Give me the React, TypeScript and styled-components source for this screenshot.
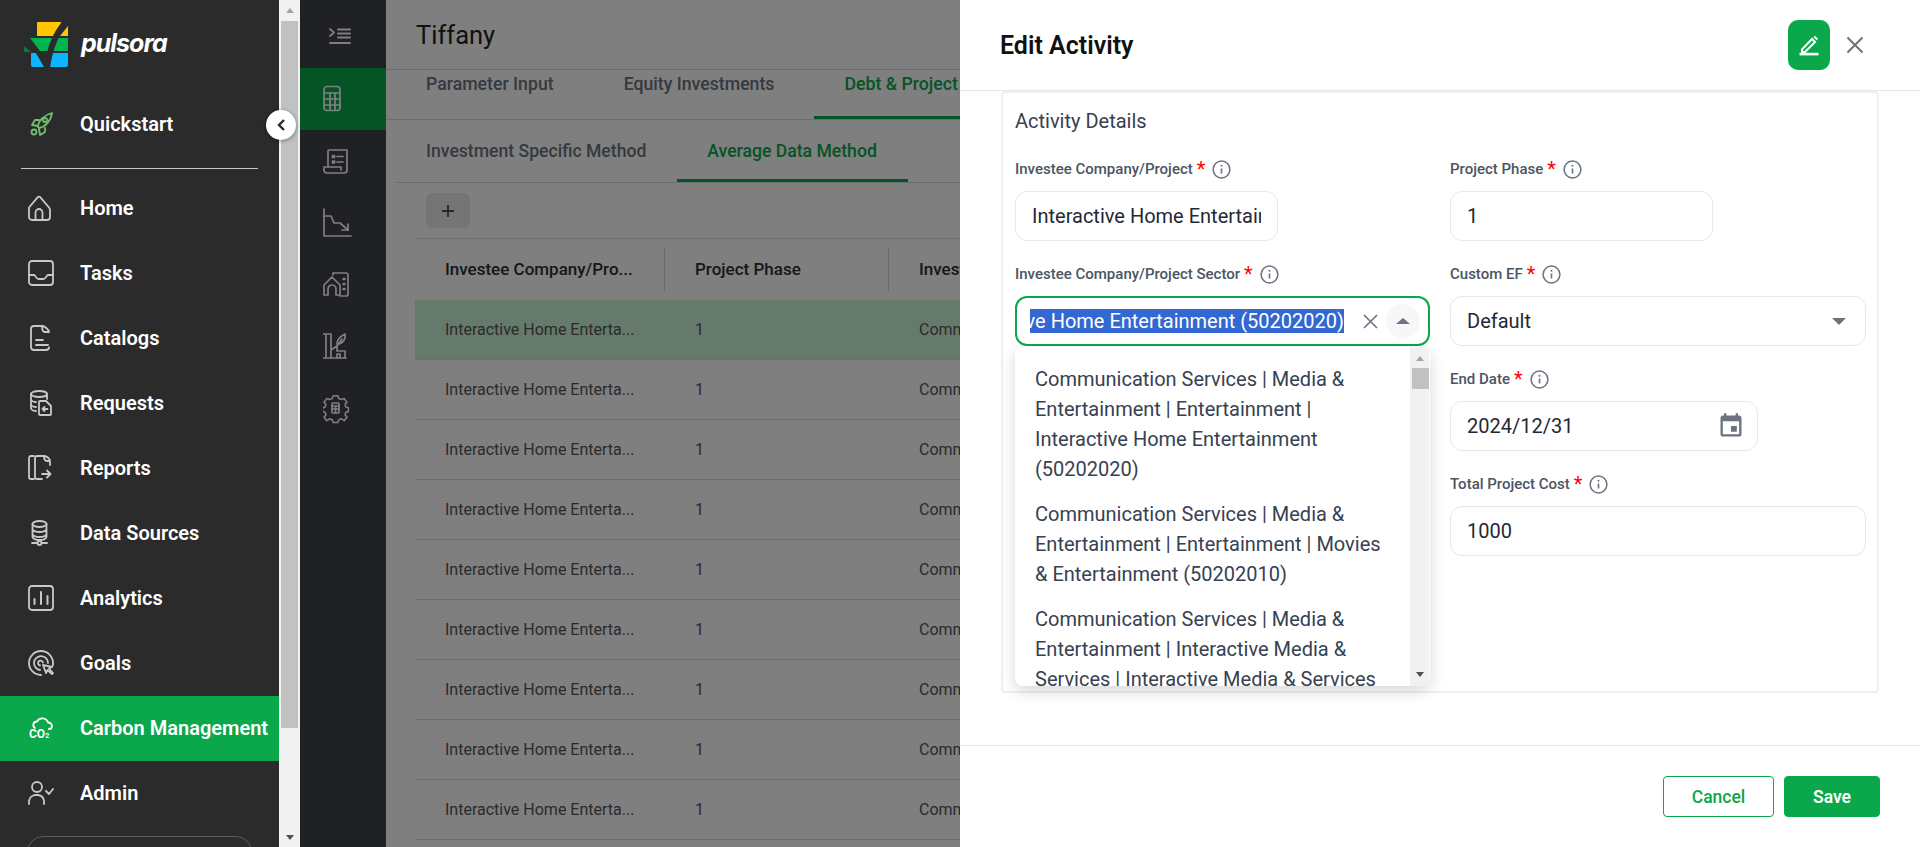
import React from "react";
import styled, { createGlobalStyle } from "styled-components";

const Global = createGlobalStyle`
  html, body { margin: 0; padding: 0; height: 100%; overflow: hidden; background: #fff; }
  * { box-sizing: border-box; }
  #root { height: 100%; }
`;

const Page = styled.div`
  display: flex;
  height: 100vh;
  overflow: hidden;
  font-family: Roboto, "Liberation Sans", sans-serif;
`;

/* ---------- left sidebar ---------- */
const Sidebar = styled.aside`
  position: relative;
  z-index: 20;
  flex: 0 0 300px;
  display: flex;
  background: #2b2b2b;
`;
const SideNav = styled.nav`
  flex: 0 0 279px;
  display: flex;
  flex-direction: column;
  overflow: hidden;
`;
const LogoRow = styled.div`
  flex: 0 0 92px;
  display: flex;
  align-items: flex-start;
  gap: 13px;
  padding: 22px 0 0 24px;
`;
const LogoText = styled.span`
  font-family: Inter, sans-serif;
  font-style: italic;
  font-weight: 700;
  font-size: 25px;
  line-height: 43px;
  letter-spacing: -1px;
  color: #fff;
`;
const NavItem = styled.div<{ $active?: boolean }>`
  flex: 0 0 65px;
  display: flex;
  align-items: center;
  gap: 26px;
  padding: 0 0 1px 28px;
  background: ${(p) => (p.$active ? "#0aa84a" : "transparent")};
  color: #fff;
  font-size: 20px;
  font-weight: 600;
  white-space: nowrap;
  svg {
    flex: 0 0 26px;
    fill: none;
    stroke: ${(p) => (p.$active ? "#fff" : "#c8c8c8")};
    stroke-width: 1.8;
    stroke-linecap: round;
    stroke-linejoin: round;
  }
`;
const QuickIcon = styled.span`
  display: flex;
  svg { stroke: #6fbf73; }
`;
const SideDivider = styled.hr`
  flex: 0 0 1px;
  width: 237px;
  margin: 11px 0 7px 21px;
  border: 0;
  background: #c4c8c4;
`;
const OrgBox = styled.div`
  flex: 0 0 60px;
  width: 225px;
  margin: 10px 0 0 27px;
  border: 1px solid #5a5d5a;
  border-radius: 16px;
`;
const SideScroll = styled.div`
  flex: 0 0 21px;
  display: flex;
  flex-direction: column;
  padding-left: 2px;
  padding-right: 2px;
  background: #f1f1f1;
`;
const ScrollArrow = styled.div<{ $down?: boolean }>`
  flex: 0 0 ${(p) => (p.$down ? "auto" : "21px")};
  margin-top: ${(p) => (p.$down ? "auto" : "0")};
  margin-bottom: ${(p) => (p.$down ? "7px" : "0")};
  display: flex;
  align-items: center;
  justify-content: center;
  &::before {
    content: "";
    border-left: 4.5px solid transparent;
    border-right: 4.5px solid transparent;
    ${(p) => (p.$down ? "border-top: 5px solid #505050;" : "border-bottom: 5px solid #a3a3a3;")}
  }
`;
const SideThumb = styled.div`
  flex: 0 0 707px;
  background: #c1c1c1;
`;
const CollapseBtn = styled.button`
  position: absolute;
  left: 266px;
  top: 110px;
  width: 30px;
  height: 30px;
  padding: 0;
  display: flex;
  align-items: center;
  justify-content: center;
  border: 0;
  border-radius: 50%;
  background: #fff;
  box-shadow: 0 1px 4px rgba(0, 0, 0, 0.4);
`;

/* ---------- dimmed page behind the drawer ---------- */
const Rail = styled.div`
  flex: 0 0 86px;
  display: flex;
  flex-direction: column;
  background: #404348;
`;
const RailItem = styled.div<{ $active?: boolean; $first?: boolean }>`
  flex: 0 0 ${(p) => (p.$first ? "68px" : "62px")};
  display: flex;
  align-items: center;
  padding-left: 23px;
  background: ${(p) => (p.$active ? "#0aa84a" : "transparent")};
  svg {
    fill: none;
    stroke: #fff;
    stroke-width: 1.7;
    stroke-linecap: round;
    stroke-linejoin: round;
  }
`;
const Content = styled.main`
  flex: 0 0 574px;
  min-width: 0;
  display: flex;
  flex-direction: column;
  overflow: hidden;
`;
const PageHeader = styled.header`
  flex: 0 0 70px;
  padding-left: 30px;
  display: flex;
  align-items: center;
  border-bottom: 1px solid #d8d8d8;
  font-size: 25.5px;
  color: #222;
`;
const MainTabs = styled.div`
  flex: 0 0 50px;
  display: flex;
  gap: 10px;
  padding-left: 10px;
  border-bottom: 1px solid #d8d8d8;
`;
const MainTab = styled.div<{ $active?: boolean }>`
  height: 49px;
  padding: 0 30px;
  font-size: 17.7px;
  font-weight: 500;
  line-height: 28px;
  white-space: nowrap;
  color: ${(p) => (p.$active ? "#0aa84a" : "#6b7280")};
  border-bottom: 3px solid ${(p) => (p.$active ? "#0aa84a" : "transparent")};
`;
const SubTabs = styled.div`
  flex: 0 0 63px;
  display: flex;
  margin-left: 10px;
  border-bottom: 1px solid #d8d8d8;
`;
const SubTab = styled.div<{ $active?: boolean }>`
  height: 62px;
  padding: 2px 31px 0 30px;
  display: flex;
  align-items: center;
  font-size: 17.6px;
  font-weight: 500;
  white-space: nowrap;
  color: ${(p) => (p.$active ? "#0aa84a" : "#6b7280")};
  border-bottom: 3px solid ${(p) => (p.$active ? "#0aa84a" : "transparent")};
`;
const Toolbar = styled.div`
  flex: 0 0 55px;
  padding: 10px 0 0 40px;
`;
const AddBtn = styled.button`
  width: 44px;
  height: 35px;
  padding: 0;
  display: flex;
  align-items: center;
  justify-content: center;
  border: 0;
  border-radius: 6px;
  background: #ebebeb;
`;
const TableGrid = styled.div`
  margin-left: 29px;
  border-top: 1px solid #dcdcdc;
`;
const HeadRow = styled.div`
  display: grid;
  grid-template-columns: 250px 224px 400px;
  height: 61px;
  align-items: center;
`;
const HeadCell = styled.div<{ $sep?: boolean }>`
  height: 43px;
  padding: 0 0 2px 30px;
  display: flex;
  align-items: center;
  font-size: 17px;
  font-weight: 500;
  color: #2e2e2e;
  white-space: nowrap;
  border-right: ${(p) => (p.$sep ? "1px solid #cfcfcf" : "0")};
`;
const BodyRow = styled.div<{ $selected?: boolean }>`
  display: grid;
  grid-template-columns: 250px 224px 400px;
  height: 60px;
  align-items: center;
  background: ${(p) => (p.$selected ? "#ccf4d8" : "transparent")};
  border-bottom: 1px solid #dcdcdc;
`;
const BodyCell = styled.div`
  padding-left: 30px;
  font-size: 16px;
  color: #555;
  white-space: nowrap;
`;
const Overlay = styled.div`
  position: fixed;
  inset: 0 0 0 300px;
  z-index: 10;
  background: rgba(0, 0, 0, 0.5);
`;

/* ---------- drawer ---------- */
const Drawer = styled.section`
  position: fixed;
  top: 0;
  right: 0;
  bottom: 0;
  z-index: 15;
  width: 960px;
  display: flex;
  flex-direction: column;
  background: #fff;
`;
const DrawerHead = styled.header`
  flex: 0 0 91px;
  display: flex;
  align-items: center;
  padding: 0 55px 0 40px;
  border-bottom: 1px solid #e5e7eb;
`;
const DrawerTitle = styled.h2`
  margin: 0;
  margin-right: auto;
  font-size: 25px;
  font-weight: 600;
  color: #111;
`;
const EditBtn = styled.button`
  width: 42px;
  height: 50px;
  padding: 0;
  display: flex;
  align-items: center;
  justify-content: center;
  border: 0;
  border-radius: 10px;
  background: #0aa84a;
`;
const CloseBtn = styled.button`
  width: 26px;
  height: 26px;
  margin: 0 -3px 0 12px;
  padding: 0;
  display: flex;
  align-items: center;
  justify-content: center;
  border: 0;
  background: transparent;
`;
const DrawerBody = styled.div`
  flex: 0 0 654px;
  padding: 0 41px;
`;
const Card = styled.div`
  height: 602px;
  padding: 16px 12px 0;
  border: 2px solid #eff0f2;
  border-radius: 4px;
`;
const CardTitle = styled.h3`
  margin: 0 0 26px;
  font-size: 20px;
  line-height: 24px;
  font-weight: 400;
  color: #374151;
`;
const FormGrid = styled.div`
  display: grid;
  grid-template-columns: 415px 416px;
  column-gap: 20px;
  row-gap: 23px;
`;
const Field = styled.div<{ $right?: boolean }>`
  position: relative;
  ${(p) => (p.$right ? "grid-column: 2;" : "")}
`;
const Label = styled.label`
  height: 20px;
  margin-bottom: 12px;
  display: flex;
  align-items: center;
  font-size: 15px;
  font-weight: 500;
  color: #4b5563;
  white-space: nowrap;
  svg { margin-left: 7px; }
`;
const Star = styled.span`
  margin-left: 4px;
  color: #f00;
  font-size: 20px;
  line-height: 18px;
  font-weight: 400;
`;
const Input = styled.input<{ $width?: number }>`
  display: block;
  width: ${(p) => (p.$width ? `${p.$width}px` : "100%")};
  height: 50px;
  padding: 0 16px;
  border: 1px solid #e5e7eb;
  border-radius: 12px;
  outline: 0;
  background: #fff;
  font: 400 20px Roboto, sans-serif;
  color: #1f2937;
`;
const ControlBox = styled.div<{ $width?: number; $focused?: boolean }>`
  width: ${(p) => (p.$width ? `${p.$width}px` : "100%")};
  height: 50px;
  display: flex;
  align-items: center;
  padding: 0 ${(p) => (p.$focused ? "8px" : "12px")} 0 ${(p) => (p.$focused ? "13px" : "16px")};
  border: ${(p) => (p.$focused ? "2px solid #0aa84a" : "1px solid #e5e7eb")};
  border-radius: 12px;
  background: #fff;
  font-size: 20px;
  color: #1f2937;
`;
const ControlText = styled.span`
  margin-right: auto;
`;
const SelectionClip = styled.div`
  flex: 0 0 314px;
  height: 24px;
  display: flex;
  justify-content: flex-end;
  overflow: hidden;
`;
const Selection = styled.span`
  flex: none;
  height: 24px;
  line-height: 24px;
  white-space: nowrap;
  background: #3367d1;
  color: #fff;
`;
const ClearBtn = styled.span`
  display: flex;
  margin-left: 19px;
`;
const ArrowRound = styled.span`
  width: 34px;
  height: 34px;
  margin-left: 8px;
  display: flex;
  align-items: center;
  justify-content: center;
  border-radius: 50%;
  background: #f7f7f7;
`;
const Caret = styled.span<{ $up?: boolean }>`
  margin-right: ${(p) => (p.$up ? "0" : "7px")};
  border-left: 7px solid transparent;
  border-right: 7px solid transparent;
  ${(p) => (p.$up ? "border-bottom: 6px solid #6b7280;" : "border-top: 7px solid #6b7280;")}
`;
const DropList = styled.div`
  position: absolute;
  top: 83px;
  left: 0;
  z-index: 3;
  width: 415px;
  height: 339px;
  overflow: hidden;
  padding: 9.5px 0 0;
  border-radius: 8px;
  background: #fff;
  box-shadow: 0 5px 15px rgba(0, 0, 0, 0.16);
`;
const DropOption = styled.div`
  width: 394px;
  padding: 7.5px 25px 7.5px 20px;
  font-size: 20px;
  line-height: 30px;
  color: #374151;
`;
const DropScroll = styled.div`
  position: absolute;
  top: 0;
  right: 1px;
  bottom: 0;
  width: 19px;
  display: flex;
  flex-direction: column;
  align-items: flex-end;
  background: #f1f1f1;
`;
const DropArrow = styled.div<{ $down?: boolean }>`
  align-self: center;
  margin: ${(p) => (p.$down ? "auto 0 9px" : "9px 0 0")};
  border-left: 4.5px solid transparent;
  border-right: 4.5px solid transparent;
  ${(p) => (p.$down ? "border-top: 5px solid #505050;" : "border-bottom: 5px solid #a3a3a3;")}
`;
const DropThumb = styled.div`
  width: 17px;
  height: 21px;
  margin-top: 7px;
  background: #c1c1c1;
`;
const DrawerFoot = styled.footer`
  flex: 1;
  display: flex;
  justify-content: flex-end;
  gap: 10px;
  padding: 30px 40px 0 0;
  border-top: 1px solid #e5e7eb;
`;
const FootBtn = styled.button<{ $primary?: boolean }>`
  width: ${(p) => (p.$primary ? "96px" : "111px")};
  height: 41px;
  border: 1px solid #0aa84a;
  border-radius: 4px;
  background: ${(p) => (p.$primary ? "#0aa84a" : "#fff")};
  color: ${(p) => (p.$primary ? "#fff" : "#0aa84a")};
  font: ${(p) => (p.$primary ? 600 : 500)} 17.5px Roboto, sans-serif;
`;

/* ---------- drawings ---------- */
const Ic = ({ children, w = 26 }: { children: React.ReactNode; w?: number }) => (
  <svg width={w} height={w} viewBox={`0 0 ${w} ${w}`}>
    {children}
  </svg>
);

const Logo = () => (
  <svg width="44" height="45" viewBox="24 22 44 45">
    <path d="M38 22h23q1 0 0 1L55 36H37v-13q0-1 1-1z" fill="#ffc600" />
    <path d="M68 26v10h-8z" fill="#ffc600" />
    <path d="M30 38h38v13H40z" fill="#00b551" />
    <path d="M24 46l7 6H24z" fill="#087a3a" />
    <path d="M31 53h5l8 14H33a2 2 0 0 1-2-2z" fill="#0bb5ff" />
    <path d="M50 53h18v12a2 2 0 0 1-2 2H50z" fill="#0bb5ff" />
    <path d="M67 21C56 32 50 46 47 68" stroke="#2b2b2b" strokeWidth="6" fill="none" />
    <path d="M23 42c10 4 18 12 24 25" stroke="#2b2b2b" strokeWidth="4" fill="none" />
  </svg>
);

const Info = () => (
  <svg width="19" height="19" viewBox="0 0 19 19">
    <circle cx="9.5" cy="9.5" r="8.4" fill="none" stroke="#6b7280" strokeWidth="1.5" />
    <path d="M9.5 8.5v5" stroke="#6b7280" strokeWidth="1.6" />
    <circle cx="9.5" cy="5.8" r="1" fill="#6b7280" />
  </svg>
);

const navItems: [string, React.ReactNode][] = [
  ["Home", <Ic key="h"><path d="M1 12.5L9.8 2.2q1.2-1.2 2.4 0L21 12.5q1 1 1 2.5v7a3 3 0 0 1-3 3H4a3 3 0 0 1-3-3v-7q0-1.5 0-2.5z" /><path d="M7.5 25v-7.5a3.5 3.5 0 0 1 7 0V25" /></Ic>],
  ["Tasks", <Ic key="t"><rect x="1" y="1" width="24" height="24" rx="3" /><path d="M1 15h5c1.5 0 2 4 4.500 4h5c2.500 0 3-4 4.500-4h5" /></Ic>],
  ["Catalogs", <Ic key="c"><path d="M14 1H6a3 3 0 0 0-3 3v18a3 3 0 0 0 3 3h12a3 3 0 0 0 3-2.500" /><path d="M14 1c0 4 1 6 3 6h4c0-2-4-6-7-6z" /><path d="M8 15h7M8 20h12" /></Ic>],
  ["Requests", <Ic key="r"><ellipse cx="11" cy="4" rx="8" ry="3" /><path d="M3 4v14c0 2 3 3 5 3M19 4v5M3 9c0 2 3 3 5 3M3 14c0 2 3 3 5 3" /><path d="M12 11h6l5 5v8a1 1 0 0 1-1 1H12a1 1 0 0 1-1-1V12a1 1 0 0 1 1-1z" /><path d="M19.500 19h-5l2-2M14.500 19l2 2" /></Ic>],
  ["Reports", <Ic key="rp"><path d="M6 1H3a2 2 0 0 0-2 2v19a2 2 0 0 0 2 2h3" /><path d="M16 1H9a2 2 0 0 0-2 2v19a2 2 0 0 0 2 2h5" /><path d="M16 1c0 4 1 5 3 5h3c0-2-3-5-6-5zM22 6v4" /><path d="M14 19h8M19 15.500l3.500 3.500-3.500 3.500" /></Ic>],
  ["Data Sources", <Ic key="d"><ellipse cx="11.500" cy="4" rx="7" ry="3" /><path d="M4.500 4v13c0 1.500 3 3 7 3s7-1.500 7-3V4M4.500 9c0 1.500 3 3 7 3s7-1.500 7-3M4.500 14c0 1.500 3 3 7 3s7-1.500 7-3" /><circle cx="11.500" cy="23" r="2" /><path d="M4 23h5.500M13.500 23H19" /></Ic>],
  ["Analytics", <Ic key="a"><rect x="1" y="1" width="24" height="24" rx="3" /><path d="M6.500 19v-5M13 19V7M19.500 19v-8" strokeWidth="2" /></Ic>],
  ["Goals", <Ic key="g"><path d="M13 25a12 12 0 1 1 12-12c0 1-.1 2-.3 2.800" /><path d="M12 20a7 7 0 1 1 8-7" /><path d="M12 15.500a2.500 2.500 0 1 1 3-3" /><path d="M15 15l3 8 1.500-3 4.500 4 1-1-4-4.500 3-1.500z" /></Ic>],
];

const railIcons: React.ReactNode[] = [
  <Ic key="1" w={30}><rect x="1" y="2.500" width="16" height="24" rx="3" /><path d="M1 9h16M1 15h16M1 21h16M7 9v17M12 9v17" /></Ic>,
  <Ic key="2" w={30}><path d="M5 21V5a1 1 0 0 1 1-1h18v20a3 3 0 0 1-3 3H4a3 3 0 0 1-3-3v-3h17v3" /><path d="M9.500 9.500h2v2h-2zM9.500 15h2v2h-2zM14 10.500h6M14 16h6" /></Ic>,
  <Ic key="3" w={30}><path d="M1 1v27h27" /><path d="M1 8h7l3 7h6l8 7" /><path d="M25 16v6h-6" /></Ic>,
  <Ic key="4" w={30}><path d="M1 15l8-8 8 8v10h-4v-6a4 4 0 0 0-8 0v6H1z" /><path d="M10 5V3h13a2 2 0 0 1 2 2v19a2 2 0 0 1-2 2h-6" /><path d="M20.500 9h1M20.500 14h1M20.500 19h1" strokeWidth="2.500" /></Ic>,
  <Ic key="5" w={30}><path d="M0 26h23M3 26V2h-3M8 2H3M8 2v24M8 18l6-4v5h8v7" /><path d="M14 12c0-5 4-8 8-10 1 5-2 10-8 10zM14 14l5-7" /><path d="M14 26v-4h3v4" /></Ic>,
  <Ic key="6" w={30}><path d="M10 2h5l1 3 3 1 3-1 3 4-2 2 .5 3 3 1v4l-3 1-.5 3 2 2-3 4-3-2-3 1-1 3h-5l-1-3-3-1-3 2-3-4 2-2-.5-3-3-1v-4l3-1 .5-3-2-2 3-4 3 1 3-1z" transform="translate(1 0) scale(.92)" /><rect x="9" y="9" width="7" height="10" rx="1" /><path d="M9 12h7M9 15h7M12.500 12v7" /></Ic>,
];

const Row = ({ selected }: { selected?: boolean }) => (
  <BodyRow $selected={selected}>
    <BodyCell>Interactive Home Enterta...</BodyCell>
    <BodyCell>1</BodyCell>
    <BodyCell>Communication Services</BodyCell>
  </BodyRow>
);

const FieldLabel = ({ text }: { text: string }) => (
  <Label>
    {text}
    <Star>*</Star>
    <Info />
  </Label>
);

export default function App() {
  return (
    <Page>
      <Global />
      <Sidebar>
        <SideNav>
          <LogoRow>
            <Logo />
            <LogoText>pulsora</LogoText>
          </LogoRow>
          <NavItem>
            <QuickIcon>
              <Ic>
                <path d="M10 16c0-6 6-12 14-14-1 8-7 14-13 15z" />
                <circle cx="17" cy="9" r="2" />
                <path d="M11 9H7l-3 5 6 1M17 17v4l-5 3-1-6" />
                <circle cx="6" cy="21" r="2.500" />
              </Ic>
            </QuickIcon>
            Quickstart
          </NavItem>
          <SideDivider />
          {navItems.map(([label, icon]) => (
            <NavItem key={label}>
              {icon}
              {label}
            </NavItem>
          ))}
          <NavItem $active>
            <Ic>
              <path d="M7 13a3.500 3.500 0 0 1 2-6.500 6 6 0 0 1 11 1 3.800 3.800 0 0 1 4 3.500c0 1.500-1 3-3 3" />
              <text x="1" y="23" fontSize="12" fontWeight="700" fontFamily="Roboto" fill="#fff" stroke="none">
                CO<tspan fontSize="7">2</tspan>
              </text>
            </Ic>
            Carbon Management
          </NavItem>
          <NavItem>
            <Ic>
              <circle cx="9" cy="7" r="5" />
              <path d="M1 24v-3a7 7 0 0 1 7-6h2a7 7 0 0 1 6 6v3M18 11l3 3 4-5" />
            </Ic>
            Admin
          </NavItem>
          <OrgBox />
        </SideNav>
        <SideScroll>
          <ScrollArrow />
          <SideThumb />
          <ScrollArrow $down />
        </SideScroll>
        <CollapseBtn aria-label="Collapse">
          <svg width="12" height="14" viewBox="0 0 12 14">
            <path d="M9 2L4 7l5 5" fill="none" stroke="#2b2b2b" strokeWidth="2.400" />
          </svg>
        </CollapseBtn>
      </Sidebar>

      <Rail>
        <RailItem $first>
          <Ic w={30}>
            <path d="M7 10l4 3.500-4 3.500" />
            <path d="M15 10.500h12M15 14.500h12M15 18.500h12" strokeWidth="2" />
            <path d="M7 24h20" strokeWidth="2.200" />
          </Ic>
        </RailItem>
        {railIcons.map((icon, i) => (
          <RailItem key={i} $active={i === 0}>
            {icon}
          </RailItem>
        ))}
      </Rail>

      <Content>
        <PageHeader>Tiffany</PageHeader>
        <MainTabs>
          <MainTab>Parameter Input</MainTab>
          <MainTab>Equity Investments</MainTab>
          <MainTab $active>Debt &amp; Project Finance</MainTab>
        </MainTabs>
        <SubTabs>
          <SubTab>Investment Specific Method</SubTab>
          <SubTab $active>Average Data Method</SubTab>
        </SubTabs>
        <Toolbar>
          <AddBtn aria-label="Add">
            <svg width="14" height="14" viewBox="0 0 14 14">
              <path d="M7 1v12M1 7h12" stroke="#555" strokeWidth="1.800" />
            </svg>
          </AddBtn>
        </Toolbar>
        <TableGrid>
          <HeadRow>
            <HeadCell $sep>Investee Company/Pro...</HeadCell>
            <HeadCell $sep>Project Phase</HeadCell>
            <HeadCell>Investee Sector</HeadCell>
          </HeadRow>
          <Row selected />
          {Array.from({ length: 8 }, (_, i) => (
            <Row key={i} />
          ))}
        </TableGrid>
      </Content>

      <Overlay />

      <Drawer>
        <DrawerHead>
          <DrawerTitle>Edit Activity</DrawerTitle>
          <EditBtn aria-label="Edit">
            <svg width="20" height="22" viewBox="0 0 20 22">
              <path d="M3 15.500L13 5l3 3L6 18H3z" fill="none" stroke="#fff" strokeWidth="2" />
              <path d="M14.500 3.200l1.500-1.500 3 3-1.500 1.500z" fill="#fff" />
              <rect x="0.500" y="18.800" width="19" height="2.600" fill="#fff" />
            </svg>
          </EditBtn>
          <CloseBtn aria-label="Close">
            <svg width="18" height="18" viewBox="0 0 18 18">
              <path d="M1.500 1.500l15 15M16.500 1.500l-15 15" stroke="#6b7280" strokeWidth="2" />
            </svg>
          </CloseBtn>
        </DrawerHead>
        <DrawerBody>
          <Card>
            <CardTitle>Activity Details</CardTitle>
            <FormGrid>
              <Field>
                <FieldLabel text="Investee Company/Project" />
                <Input $width={263} readOnly value="Interactive Home Entertainment" />
              </Field>
              <Field>
                <FieldLabel text="Project Phase" />
                <Input $width={263} readOnly value="1" />
              </Field>
              <Field>
                <FieldLabel text="Investee Company/Project Sector" />
                <ControlBox $focused>
                  <SelectionClip>
                    <Selection>Interactive Home Entertainment (50202020)</Selection>
                  </SelectionClip>
                  <ClearBtn>
                    <svg width="15" height="15" viewBox="0 0 15 15">
                      <path d="M1 1l13 13M14 1L1 14" stroke="#6b7280" strokeWidth="1.600" />
                    </svg>
                  </ClearBtn>
                  <ArrowRound>
                    <Caret $up />
                  </ArrowRound>
                </ControlBox>
                <DropList>
                  <DropOption>Communication Services | Media &amp; Entertainment | Entertainment | Interactive Home Entertainment (50202020)</DropOption>
                  <DropOption>Communication Services | Media &amp; Entertainment | Entertainment | Movies &amp; Entertainment (50202010)</DropOption>
                  <DropOption>Communication Services | Media &amp; Entertainment | Interactive Media &amp; Services | Interactive Media &amp; Services (50203010)</DropOption>
                  <DropScroll>
                    <DropArrow />
                    <DropThumb />
                    <DropArrow $down />
                  </DropScroll>
                </DropList>
              </Field>
              <Field>
                <FieldLabel text="Custom EF" />
                <ControlBox>
                  <ControlText>Default</ControlText>
                  <Caret />
                </ControlBox>
              </Field>
              <Field $right>
                <FieldLabel text="End Date" />
                <ControlBox $width={308}>
                  <ControlText>2024/12/31</ControlText>
                  <svg width="28" height="28" viewBox="0 0 24 24">
                    <path fill="#6b7280" d="M17 12h-5v5h5v-5zM16 1v2H8V1H6v2H5c-1.110 0-1.990.9-1.990 2L3 19c0 1.100.89 2 2 2h14c1.100 0 2-.9 2-2V5c0-1.100-.9-2-2-2h-1V1h-2zm3 18H5V8h14v11z" />
                  </svg>
                </ControlBox>
              </Field>
              <Field $right>
                <FieldLabel text="Total Project Cost" />
                <Input readOnly value="1000" />
              </Field>
            </FormGrid>
          </Card>
        </DrawerBody>
        <DrawerFoot>
          <FootBtn>Cancel</FootBtn>
          <FootBtn $primary>Save</FootBtn>
        </DrawerFoot>
      </Drawer>
    </Page>
  );
}
